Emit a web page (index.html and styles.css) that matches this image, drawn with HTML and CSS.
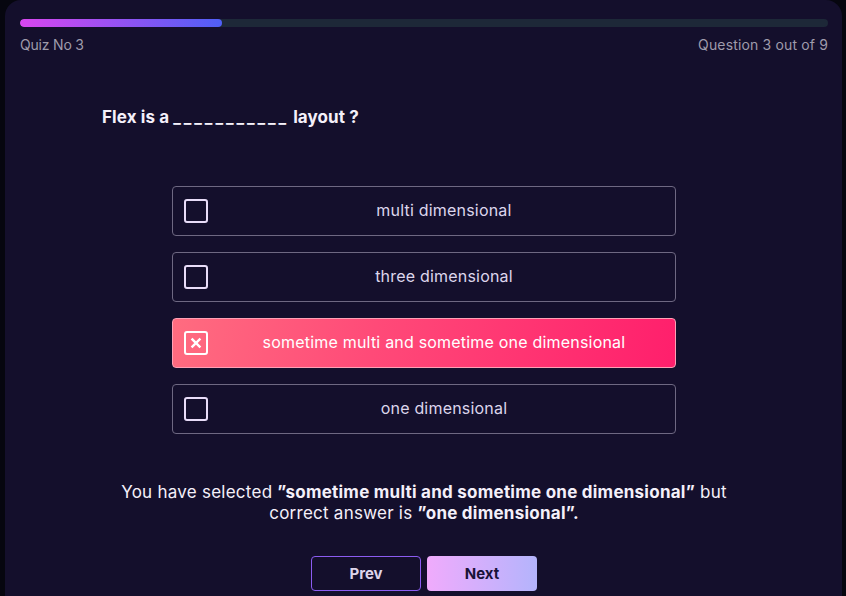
FILE: index.html
```html
<!DOCTYPE html>
<html>
<head>
<meta charset="utf-8">
<link rel="stylesheet" href="styles.css">
</head>
<body>
<div class="card">
  <div class="progress"><div class="progress-fill"></div></div>
  <div class="meta">
    <span>Quiz No 3</span>
    <span class="meta-right">Question 3 out of 9</span>
  </div>
  <h2 class="question">Flex is a <span class="blank">___________</span> layout ?</h2>
  <div class="options">
    <div class="option"><span class="box"></span><span class="label">multi dimensional</span></div>
    <div class="option"><span class="box"></span><span class="label">three dimensional</span></div>
    <div class="option selected"><span class="box"><svg viewBox="0 0 20 20" width="20" height="20"><path d="M6 6 L14 14 M14 6 L6 14" stroke="#fff" stroke-width="2.6" stroke-linecap="square"/></svg></span><span class="label">sometime multi and sometime one dimensional</span></div>
    <div class="option"><span class="box"></span><span class="label">one dimensional</span></div>
  </div>
  <p class="feedback">You have selected <b>”sometime multi and sometime one dimensional”</b> but<br>correct answer is <b>”one dimensional”.</b></p>
  <div class="actions">
    <button class="btn btn-prev">Prev</button>
    <button class="btn btn-next">Next</button>
  </div>
</div>
</body>
</html>
```
FILE: styles.css
```css
html, body {
  margin: 0;
  padding: 0;
  background: #06060f;
  height: 100%;
  overflow: hidden;
}
body {
  font-family: Inter, "Noto Sans", sans-serif;
}
.card {
  margin: 0 4px 0 5px;
  background: #140f2c;
  border-radius: 16px;
  padding: 19px 14px 40px 15px;
  min-height: 620px;
  box-sizing: border-box;
}
.progress {
  height: 8px;
  border-radius: 4px;
  background: #1d2838;
  overflow: hidden;
}
.progress-fill {
  width: 25%;
  height: 100%;
  border-radius: 4px;
  background: linear-gradient(90deg, #d946ef, #4f5ff6);
}
.meta {
  display: flex;
  justify-content: space-between;
  margin-top: 9px;
  font-size: 14px;
  line-height: 18px;
  color: #9f9bab;
  letter-spacing: -0.2px;
}
.meta-right {
  letter-spacing: 0.15px;
}
.question {
  margin: 53px 0 0 82px;
  font-size: 17px;
  line-height: 20px;
  font-weight: 700;
  color: #f4f0fa;
  letter-spacing: 0.1px;
}
.blank {
  letter-spacing: 2.9px;
  font-size: 16px;
}
.options {
  width: 504px;
  margin: 59px auto 0;
  display: flex;
  flex-direction: column;
  gap: 16px;
}
.option {
  height: 50px;
  box-sizing: border-box;
  border: 1px solid #6e6882;
  border-radius: 4px;
  display: flex;
  align-items: center;
  padding: 0 11px;
  position: relative;
}
.box {
  width: 24px;
  height: 24px;
  box-sizing: border-box;
  border: 2px solid #e8dcf8;
  border-radius: 3px;
  flex: none;
  display: flex;
  align-items: center;
  justify-content: center;
}
.label {
  flex: 1;
  text-align: center;
  font-size: 16px;
  color: #ddd6ec;
  letter-spacing: 0.2px;
  margin-bottom: 2px;
  padding-left: 16px;
}
.selected {
  background: linear-gradient(100deg, #ff6c80 0%, #ff4a78 40%, #ff1f6c 100%);
  border-color: #ffa0b5;
}
.selected .box {
  border-color: #ffffff;
}
.selected .box svg {
  width: 18px;
  height: 18px;
}
.selected .label {
  color: #ffffff;
}
.feedback {
  margin: 48px 0 0;
  text-align: center;
  font-size: 17px;
  line-height: 21px;
  color: #f4f0fa;
  letter-spacing: 0.25px;
}
.feedback b {
  font-weight: 700;
}
.actions {
  display: flex;
  justify-content: center;
  gap: 6px;
  margin-top: 32px;
}
.btn {
  width: 110px;
  height: 35px;
  border-radius: 4px;
  font-family: Inter, sans-serif;
  font-size: 15px;
  font-weight: 700;
  cursor: pointer;
}
.btn-prev {
  background: transparent;
  border: 1px solid #8c5cf2;
  color: #ddd4ea;
}
.btn-next {
  border: none;
  background: linear-gradient(90deg, #f0abfc, #b4b4fc);
  color: #1a1238;
}
```
